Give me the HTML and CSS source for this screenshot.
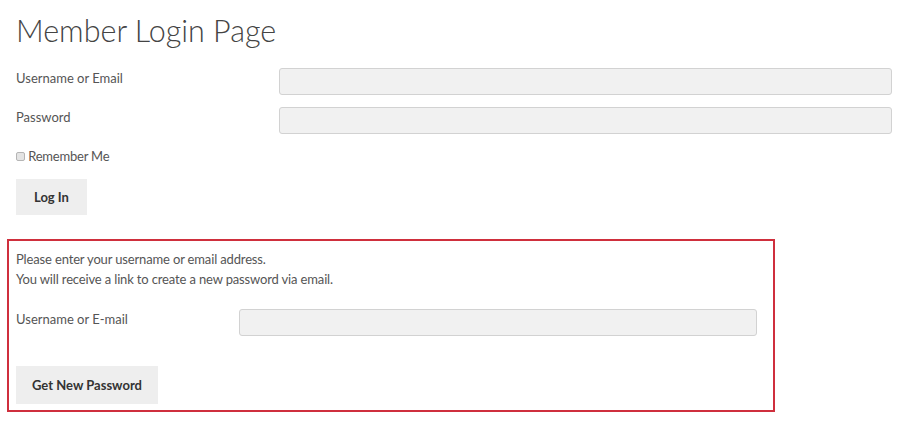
FILE: index.html
```html
<!doctype html>
<html>
<head>
<meta charset=utf-8>
<title>Member Login Page</title>
<link rel="stylesheet" href="styles.css">
</head>
<body>

<h1 class=page-title>Member Login Page</h1>

<form class=login-form>
  <div class=form-row>
    <label for=user_login>Username or Email</label>
    <input type=text id=user_login class=text-input>
  </div>
  <div class=form-row>
    <label for=user_pass>Password</label>
    <input type=password id=user_pass class=text-input>
  </div>
  <p class=remember>
    <label><input type=checkbox class=check> Remember Me</label>
  </p>
  <button type=submit class=flat-button>Log In</button>
</form>

<form class=lost-password>
  <p class=note>Please enter your username or email address.<br>
  You will receive a link to create a new password via email.</p>
  <div class=form-row>
    <label for=user_email>Username or E-mail</label>
    <input type=text id=user_email class=text-input>
  </div>
  <button type=submit class=flat-button>Get New Password</button>
</form>

</body>
</html>
```

FILE: styles.css
```css
body {
  margin: 0;
  padding: 0 8px 0 16px;
  font-family: Lato, "Noto Sans", sans-serif;
  font-size: 13px;
  color: #555;
  background: #fff;
}

.page-title {
  margin: 8px 0 16px;
  font-size: 30.5px;
  line-height: 44px;
  font-weight: 300;
  color: #444;
}

.form-row {
  display: grid;
  grid-template-columns: 263px 1fr;
  align-items: start;
  margin-bottom: 12px;
}
.form-row label {
  line-height: 20px;
}

.text-input {
  box-sizing: border-box;
  height: 27px;
  margin: 0;
  padding: 0 8px;
  background: #f1f1f1;
  border: 1px solid #d2d2d2;
  border-radius: 3px;
  font: inherit;
}

.remember {
  margin: 12px 0 0;
  line-height: 20px;
  letter-spacing: -0.2px;
}
.check {
  -webkit-appearance: none;
  appearance: none;
  box-sizing: border-box;
  width: 9px;
  height: 9px;
  margin: 0;
  vertical-align: 0;
  background: #e4e4e4;
  border: 1px solid #b5b5b5;
  border-radius: 2px;
}

.flat-button {
  display: block;
  margin-top: 13px;
  padding: 0 18px;
  height: 36px;
  background: #eee;
  border: 0;
  font-family: inherit;
  font-size: 13px;
  font-weight: bold;
  color: #333;
}

.lost-password {
  margin: 24px 117px 10px -9px;
  padding: 8px 16px 6px 7px;
  border: 2px solid #cf2f3d;
}
.lost-password .note {
  margin: 0 0 20px;
  line-height: 20px;
  letter-spacing: -0.15px;
}
.lost-password .form-row {
  grid-template-columns: 223px 1fr;
  margin-bottom: 0;
}
.lost-password .flat-button {
  margin-top: 30px;
  height: 38px;
  padding: 0 16px;
}
```
